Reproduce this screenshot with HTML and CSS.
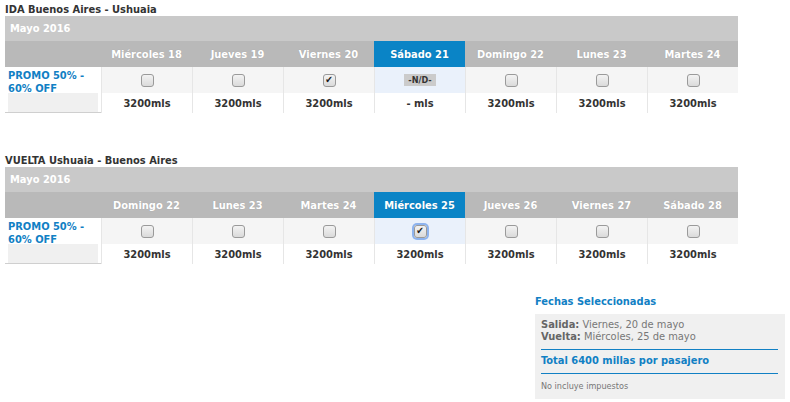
FILE: index.html
```html
<!doctype html>
<html lang="es">

<head>
  <meta charset="UTF-8" />
  <title>Seleccion de fechas</title>
  <link rel="stylesheet" href="styles.css">
</head>

<body>
  <div class="page">

    <section class="leg">
      <h2 class="leg-title">IDA Buenos Aires - Ushuaia</h2>
      <div class="calendar">
        <div class="month">Mayo 2016</div>
        <div class="head-blank"></div>
        <div class="day">Miércoles 18</div>
        <div class="day">Jueves 19</div>
        <div class="day">Viernes 20</div>
        <div class="day active">Sábado 21</div>
        <div class="day">Domingo 22</div>
        <div class="day">Lunes 23</div>
        <div class="day">Martes 24</div>

        <div class="fare">
          <span class="fare-name">PROMO 50% - 60% OFF</span>
          <span class="fare-fill"></span>
        </div>
        <div class="pick"><span class="box"></span></div>
        <div class="pick"><span class="box"></span></div>
        <div class="pick"><span class="box checked"></span></div>
        <div class="pick active"><span class="na">-N/D-</span></div>
        <div class="pick"><span class="box"></span></div>
        <div class="pick"><span class="box"></span></div>
        <div class="pick"><span class="box"></span></div>

        <div class="price">3200mls</div>
        <div class="price">3200mls</div>
        <div class="price">3200mls</div>
        <div class="price">- mls</div>
        <div class="price">3200mls</div>
        <div class="price">3200mls</div>
        <div class="price">3200mls</div>
      </div>
    </section>

    <section class="leg leg-back">
      <h2 class="leg-title">VUELTA Ushuaia - Buenos Aires</h2>
      <div class="calendar">
        <div class="month">Mayo 2016</div>
        <div class="head-blank"></div>
        <div class="day">Domingo 22</div>
        <div class="day">Lunes 23</div>
        <div class="day">Martes 24</div>
        <div class="day active">Miércoles 25</div>
        <div class="day">Jueves 26</div>
        <div class="day">Viernes 27</div>
        <div class="day">Sábado 28</div>

        <div class="fare">
          <span class="fare-name">PROMO 50% - 60% OFF</span>
          <span class="fare-fill"></span>
        </div>
        <div class="pick"><span class="box"></span></div>
        <div class="pick"><span class="box"></span></div>
        <div class="pick"><span class="box"></span></div>
        <div class="pick active"><span class="box checked focus"></span></div>
        <div class="pick"><span class="box"></span></div>
        <div class="pick"><span class="box"></span></div>
        <div class="pick"><span class="box"></span></div>

        <div class="price">3200mls</div>
        <div class="price">3200mls</div>
        <div class="price">3200mls</div>
        <div class="price">3200mls</div>
        <div class="price">3200mls</div>
        <div class="price">3200mls</div>
        <div class="price">3200mls</div>
      </div>
    </section>

    <div class="summary-row">
      <aside class="summary">
        <h3 class="summary-title">Fechas Seleccionadas</h3>
        <div class="summary-box">
          <p class="trip"><b>Salida:</b> Viernes, 20 de mayo</p>
          <p class="trip"><b>Vuelta:</b> Miércoles, 25 de mayo</p>
          <p class="total">Total 6400 millas por pasajero</p>
          <p class="note">No incluye impuestos</p>
        </div>
      </aside>
    </div>

  </div>
</body>

</html>
```

FILE: styles.css
```css
* {
  margin: 0;
  padding: 0;
  box-sizing: border-box;
}

body {
  font-family: 'DejaVu Sans Condensed', 'DejaVu Sans', sans-serif;
  font-size: 11px;
  color: #333;
  background: #fff;
}

.page {
  padding: 3px 5px 0 5px;
}

.leg-title {
  font-size: 11px;
  font-weight: bold;
  color: #333;
  line-height: 13px;
}

.leg-back {
  margin-top: 41px;
}

.calendar {
  display: grid;
  grid-template-columns: 96px repeat(7, 91px);
  grid-template-rows: 25px 26px 26px 20px;
  width: 733px;
}

.month {
  grid-column: 1 / -1;
  background: #c9c9c9;
  color: #fff;
  font-weight: bold;
  font-size: 11px;
  padding-left: 5px;
  display: flex;
  align-items: center;
}

.head-blank {
  background: #b9b9b9;
}

.day {
  background: #b9b9b9;
  color: #fff;
  font-weight: bold;
  font-size: 11px;
  text-shadow: 0 0 1px rgba(0, 0, 0, 0.15);
  display: flex;
  align-items: center;
  justify-content: center;
}

.day.active {
  background: #0a84c6;
}

.fare {
  grid-row: 3 / 5;
  display: flex;
  flex-direction: column;
  padding: 2px 2px 0 3px;
  border-bottom: 1px solid #cfcfcf;
}

.fare-name {
  color: #1180c4;
  font-weight: bold;
  font-size: 11px;
  line-height: 13px;
  height: 24px;
}

.fare-fill {
  flex: 1;
  background: #f0f0f0;
  margin-right: 1px;
}

.pick {
  background: #f5f5f5;
  border-left: 1px solid #e6e6e6;
  display: flex;
  align-items: center;
  justify-content: center;
}

.pick.active {
  background: #eaf1fb;
}

.box {
  width: 13px;
  height: 13px;
  border: 1px solid #9a9a9a;
  border-radius: 3px;
  background: linear-gradient(#f3f3f3, #dadada);
  display: flex;
  align-items: center;
  justify-content: center;
  font-size: 10px;
  font-weight: bold;
  line-height: 1;
  color: #1a1a1a;
}

.box.checked::before {
  content: "✔";
}

.box.focus {
  box-shadow: 0 0 0 2px #8db3ee;
}

.na {
  background: #cbcbcb;
  color: #333;
  font-weight: bold;
  font-size: 9px;
  padding: 1px 4px;
  line-height: 10px;
}

.price {
  border-left: 1px solid #e6e6e6;
  font-weight: bold;
  font-size: 11px;
  display: flex;
  align-items: center;
  justify-content: center;
}

.summary-row {
  display: flex;
  justify-content: flex-end;
  margin-top: 31px;
}

.summary {
  width: 250px;
}

.summary-title {
  color: #1180c4;
  font-size: 11px;
  font-weight: bold;
  line-height: 13px;
  margin-bottom: 6px;
}

.summary-box {
  background: #f0f0f0;
  padding: 5px 7px 8px 6px;
  color: #777;
}

.trip {
  font-size: 11px;
  line-height: 12px;
}

.trip b {
  color: #666;
}

.total {
  margin-top: 6px;
  border-top: 1px solid #1180c4;
  border-bottom: 1px solid #1180c4;
  padding: 5px 0 6px;
  color: #1180c4;
  font-weight: bold;
  font-size: 11px;
  line-height: 12px;
}

.note {
  margin-top: 7px;
  font-size: 9px;
  line-height: 10px;
  color: #777;
}
```
